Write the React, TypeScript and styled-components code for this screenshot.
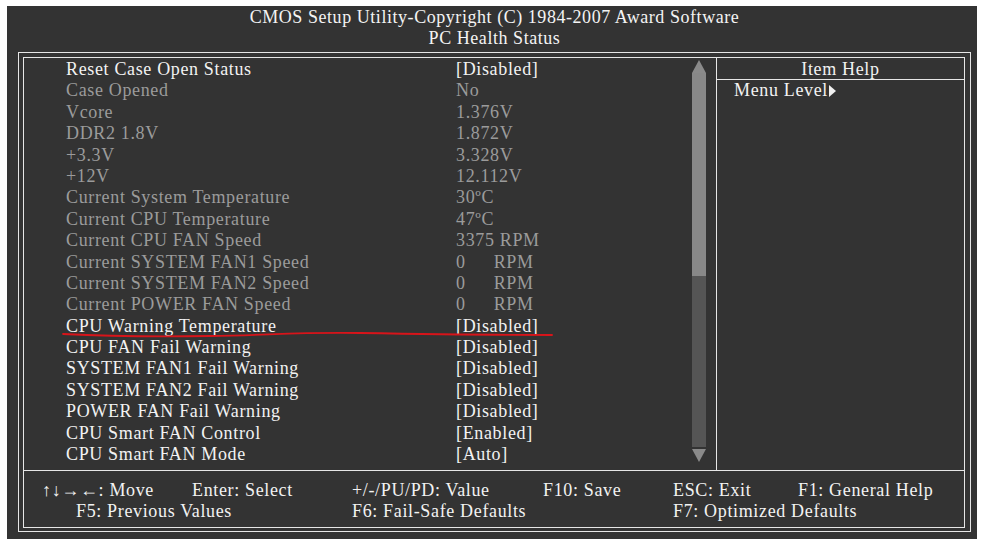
import styled, { createGlobalStyle } from "styled-components";

const GlobalStyle = createGlobalStyle`
  html, body {
    margin: 0;
    padding: 0;
    background: #ffffff;
  }
  body {
    font-family: "Liberation Serif", "Times New Roman", serif;
  }
`;

type Row = { label: string; value: string; active: boolean; rpm?: boolean };

const rows: Row[] = [
  { label: "Reset Case Open Status", value: "[Disabled]", active: true },
  { label: "Case Opened", value: "No", active: false },
  { label: "Vcore", value: "1.376V", active: false },
  { label: "DDR2 1.8V", value: "1.872V", active: false },
  { label: "+3.3V", value: "3.328V", active: false },
  { label: "+12V", value: "12.112V", active: false },
  { label: "Current System Temperature", value: "30ºC", active: false },
  { label: "Current CPU Temperature", value: "47ºC", active: false },
  { label: "Current CPU FAN Speed", value: "3375 RPM", active: false },
  { label: "Current SYSTEM FAN1 Speed", value: "0", active: false, rpm: true },
  { label: "Current SYSTEM FAN2 Speed", value: "0", active: false, rpm: true },
  { label: "Current POWER FAN Speed", value: "0", active: false, rpm: true },
  { label: "CPU Warning Temperature", value: "[Disabled]", active: true },
  { label: "CPU FAN Fail Warning", value: "[Disabled]", active: true },
  { label: "SYSTEM FAN1 Fail Warning", value: "[Disabled]", active: true },
  { label: "SYSTEM FAN2 Fail Warning", value: "[Disabled]", active: true },
  { label: "POWER FAN Fail Warning", value: "[Disabled]", active: true },
  { label: "CPU Smart FAN Control", value: "[Enabled]", active: true },
  { label: "CPU Smart FAN Mode", value: "[Auto]", active: true },
];

type Key = { text: string; col: number; indent?: number };

const keysTop: Key[] = [
  { text: "↑↓→←: Move", col: 1 },
  { text: "Enter: Select", col: 2 },
  { text: "+/-/PU/PD: Value", col: 3 },
  { text: "F10: Save", col: 4 },
  { text: "ESC: Exit", col: 5 },
  { text: "F1: General Help", col: 6 },
];

const keysBottom: Key[] = [
  { text: "F5: Previous Values", col: 1, indent: 34 },
  { text: "F6: Fail-Safe Defaults", col: 3 },
  { text: "F7: Optimized Defaults", col: 5 },
];

const App = () => {
  return (
    <>
      <GlobalStyle />
      <Screen>
        <Title>
          <div>CMOS Setup Utility-Copyright (C) 1984-2007 Award Software</div>
          <div>PC Health Status</div>
        </Title>
        <Frame>
          <Inner>
            <MainPanel>
              <List>
                {rows.map((r) => (
                  <ItemRow key={r.label} $active={r.active}>
                    <span>{r.label}</span>
                    <span>
                      {r.value}
                      {r.rpm && <Rpm>RPM</Rpm>}
                    </span>
                  </ItemRow>
                ))}
                <Scribble viewBox="0 0 500 10" preserveAspectRatio="none">
                  <path
                    d="M1 4 C 40 6, 90 7, 150 6 S 240 2, 300 3 S 420 5, 494 5"
                    fill="none"
                    stroke="#d8141a"
                    strokeWidth="1.8"
                    strokeLinecap="round"
                  />
                </Scribble>
              </List>
              <ScrollBar>
                <Arrow viewBox="0 0 14 13">
                  <polygon points="7,0 14,13 0,13" fill="#8a8a8a" />
                </Arrow>
                <Thumb />
                <Track />
                <Arrow viewBox="0 0 14 13">
                  <polygon points="0,0 14,0 7,13" fill="#8a8a8a" />
                </Arrow>
              </ScrollBar>
            </MainPanel>
            <HelpPanel>
              <HelpHeader>Item Help</HelpHeader>
              <HelpBody>
                Menu Level
                <Caret viewBox="0 0 7 12">
                  <polygon points="0,0 7,6 0,12" fill="#f0f0f0" />
                </Caret>
              </HelpBody>
            </HelpPanel>
            <Footer>
              {keysTop.map((k) => (
                <KeyHint key={k.text} $col={k.col} $row={1} $indent={k.indent ?? 0}>
                  {k.text}
                </KeyHint>
              ))}
              {keysBottom.map((k) => (
                <KeyHint key={k.text} $col={k.col} $row={2} $indent={k.indent ?? 0}>
                  {k.text}
                </KeyHint>
              ))}
            </Footer>
          </Inner>
        </Frame>
      </Screen>
    </>
  );
};

export default App;

const Screen = styled.div`
  margin: 6px 0 0 7px;
  width: 970px;
  height: 533px;
  box-sizing: border-box;
  background: #333333;
  padding: 0 6px 0 11px;
  display: flex;
  flex-direction: column;
  color: #f2f2f2;
  font-size: 18px;
  letter-spacing: 0.65px;
`;

const Title = styled.div`
  height: 45px;
  display: flex;
  flex-direction: column;
  align-items: center;
  justify-content: flex-start;
  padding-top: 1px;
  line-height: 21px;
  letter-spacing: 0.55px;
  color: #f4f4f4;
`;

const Frame = styled.div`
  width: 953px;
  height: 480px;
  box-sizing: border-box;
  border: 1px solid #e6e6e6;
  padding: 4px 5px 3px 4px;
`;

const Inner = styled.div`
  height: 100%;
  box-sizing: border-box;
  border: 1px solid #e6e6e6;
  display: grid;
  grid-template-columns: 693px 1fr;
  grid-template-rows: 412px 1fr;
`;

const MainPanel = styled.div`
  display: flex;
  border-right: 1px solid #e6e6e6;
`;

const List = styled.div`
  position: relative;
  flex: 1;
  padding: 1px 0 0 42px;
`;

const ItemRow = styled.div<{ $active: boolean }>`
  display: grid;
  grid-template-columns: 390px 1fr;
  height: 21.4px;
  line-height: 21.4px;
  white-space: nowrap;
  color: ${(p) => (p.$active ? "#f2f2f2" : "#9b9b9b")};
`;

const Rpm = styled.span`
  margin-left: 28px;
`;

const Scribble = styled.svg`
  position: absolute;
  left: 38px;
  top: 272px;
  width: 496px;
  height: 10px;
  pointer-events: none;
`;

const ScrollBar = styled.div`
  width: 14px;
  margin: 2px 10px 8px 0;
  display: flex;
  flex-direction: column;
`;

const Arrow = styled.svg`
  width: 14px;
  height: 13px;
  display: block;
`;

const Thumb = styled.div`
  height: 203px;
  background: #888888;
`;

const Track = styled.div`
  flex: 1;
  background: #555555;
  margin-bottom: 2px;
`;

const HelpPanel = styled.div`
  display: flex;
  flex-direction: column;
`;

const HelpHeader = styled.div`
  height: 21px;
  border-bottom: 1px solid #e6e6e6;
  text-align: center;
  line-height: 22px;
`;

const HelpBody = styled.div`
  padding: 0 0 0 17px;
  line-height: 21px;
  display: flex;
  align-items: center;
  height: 21px;
`;

const Caret = styled.svg`
  width: 7px;
  height: 12px;
  margin-left: 1px;
`;

const Footer = styled.div`
  grid-column: 1 / span 2;
  border-top: 1px solid #e6e6e6;
  display: grid;
  grid-template-columns: 150px 160px 191px 130px 125px 1fr;
  grid-template-rows: 21px 21px;
  padding: 9px 0 0 18px;
  line-height: 21px;
  white-space: nowrap;
`;

const KeyHint = styled.div<{ $col: number; $row: number; $indent: number }>`
  grid-column: ${(p) => p.$col};
  grid-row: ${(p) => p.$row};
  padding-left: ${(p) => p.$indent}px;
`;
